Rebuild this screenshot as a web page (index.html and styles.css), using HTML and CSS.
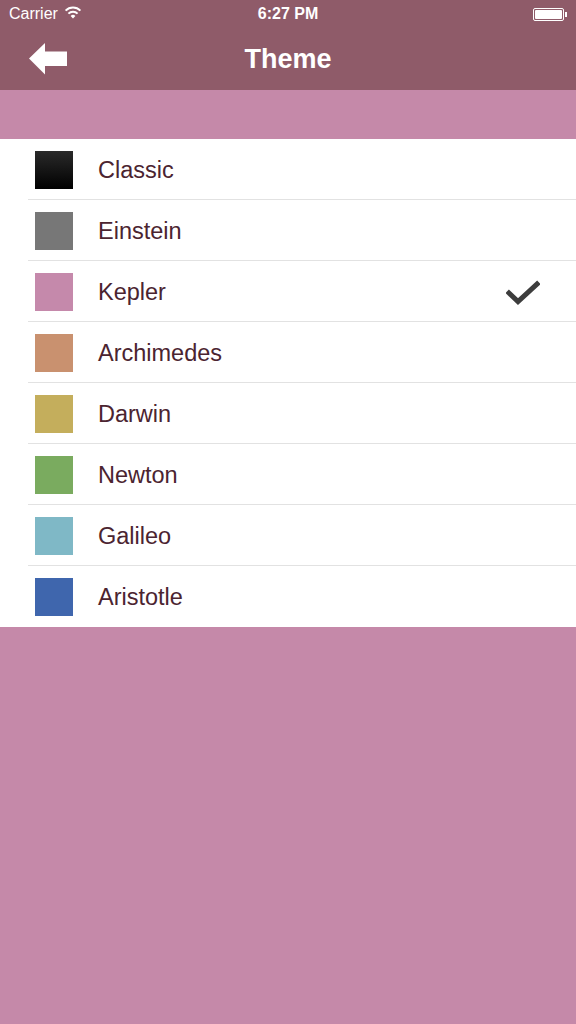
FILE: index.html
```html
<!DOCTYPE html>
<html>
<head>
<meta charset="utf-8">
<link rel="stylesheet" href="styles.css">
</head>
<body>
<div class="app">
  <header class="topbar">
    <div class="status">
      <div class="status-left">
        <span class="carrier">Carrier</span>
        <svg class="wifi" width="18" height="13" viewBox="0 0 18 13">
          <path d="M9 12.5 L6.6 9.9 A3.4 3.4 0 0 1 11.4 9.9 Z" fill="#fff"/>
          <path d="M4.4 7.6 A6.5 6.5 0 0 1 13.6 7.6" stroke="#fff" stroke-width="2" fill="none"/>
          <path d="M1.6 4.6 A10.5 10.5 0 0 1 16.4 4.6" stroke="#fff" stroke-width="2" fill="none"/>
        </svg>
      </div>
      <span class="time">6:27 PM</span>
      <div class="status-right">
        <div class="battery"><div class="battery-fill"></div></div>
        <div class="battery-tip"></div>
      </div>
    </div>
    <div class="navbar">
      <svg class="back" width="40" height="32" viewBox="0 0 40 32">
        <path d="M0 15.5 L16 0 L16 8.5 L38 8.5 L38 23 L16 23 L16 31.5 Z" fill="#fff"/>
      </svg>
      <h1 class="title">Theme</h1>
    </div>
  </header>
  <div class="band"></div>
  <ul class="list">
    <li class="row"><span class="swatch classic"></span><span class="name">Classic</span></li>
    <li class="row"><span class="swatch einstein"></span><span class="name">Einstein</span></li>
    <li class="row"><span class="swatch kepler"></span><span class="name">Kepler</span>
      <svg class="check" width="34" height="26" viewBox="0 0 34 26"><path d="M3 13 L12 21.5 L31 4" stroke="#3d3d3d" stroke-width="5" fill="none" stroke-linecap="square"/></svg>
    </li>
    <li class="row"><span class="swatch archimedes"></span><span class="name">Archimedes</span></li>
    <li class="row"><span class="swatch darwin"></span><span class="name">Darwin</span></li>
    <li class="row"><span class="swatch newton"></span><span class="name">Newton</span></li>
    <li class="row"><span class="swatch galileo"></span><span class="name">Galileo</span></li>
    <li class="row last"><span class="swatch aristotle"></span><span class="name">Aristotle</span></li>
  </ul>
</div>
</body>
</html>
```

FILE: styles.css
```css
* { box-sizing: border-box; }
html, body { margin: 0; padding: 0; }
body {
  width: 576px;
  height: 1024px;
  background: #c589a9;
  font-family: "Liberation Sans", Arial, sans-serif;
  overflow: hidden;
}
.topbar {
  background: #8f5b69;
  height: 90px;
  color: #fff;
}
.status {
  height: 30px;
  display: flex;
  align-items: center;
  justify-content: space-between;
  padding: 0 9px 2px 9px;
  position: relative;
}
.status-left { display: flex; align-items: center; gap: 6px; }
.carrier { font-size: 16px; }
.wifi { margin-top: -3px; }
.time {
  position: absolute;
  left: 0; right: 0;
  text-align: center;
  font-size: 16px;
  font-weight: bold;
  pointer-events: none;
}
.status-right { display: flex; align-items: center; }
.battery {
  width: 31px;
  height: 13px;
  border: 1px solid #fff;
  border-radius: 2px;
  padding: 1px;
}
.battery-fill { width: 100%; height: 100%; background: #fff; border-radius: 1px; }
.battery-tip { width: 2px; height: 5px; background: #fff; margin-left: 1px; }
.navbar {
  height: 60px;
  display: flex;
  align-items: center;
  justify-content: center;
  position: relative;
}
.back {
  position: absolute;
  left: 29px;
  top: 13px;
}
.title {
  margin: 0 0 2px 0;
  font-size: 27px;
  font-weight: bold;
  color: #fff;
}
.band { height: 49px; background: #c589a9; }
.list {
  list-style: none;
  margin: 0;
  padding: 0;
  background: #fff;
}
.row {
  height: 61px;
  display: flex;
  align-items: center;
  padding-left: 35px;
  position: relative;
}
.row::after {
  content: "";
  position: absolute;
  left: 28px;
  right: 0;
  bottom: 0;
  height: 1px;
  background: #e2e2e2;
}
.row.last::after { display: none; }
.swatch {
  width: 38px;
  height: 38px;
  flex: none;
}
.name {
  margin-left: 25px;
  padding-top: 2px;
  font-size: 23.5px;
  color: #4b2430;
}
.check { position: absolute; left: 506px; top: 19px; }
.classic { background: linear-gradient(#2a2a2a, #000); }
.einstein { background: #777777; }
.kepler { background: #c589ab; }
.archimedes { background: #c9916f; }
.darwin { background: #c4ae5c; }
.newton { background: #7aab5f; }
.galileo { background: #7fb8c6; }
.aristotle { background: #3f66ad; }
```
